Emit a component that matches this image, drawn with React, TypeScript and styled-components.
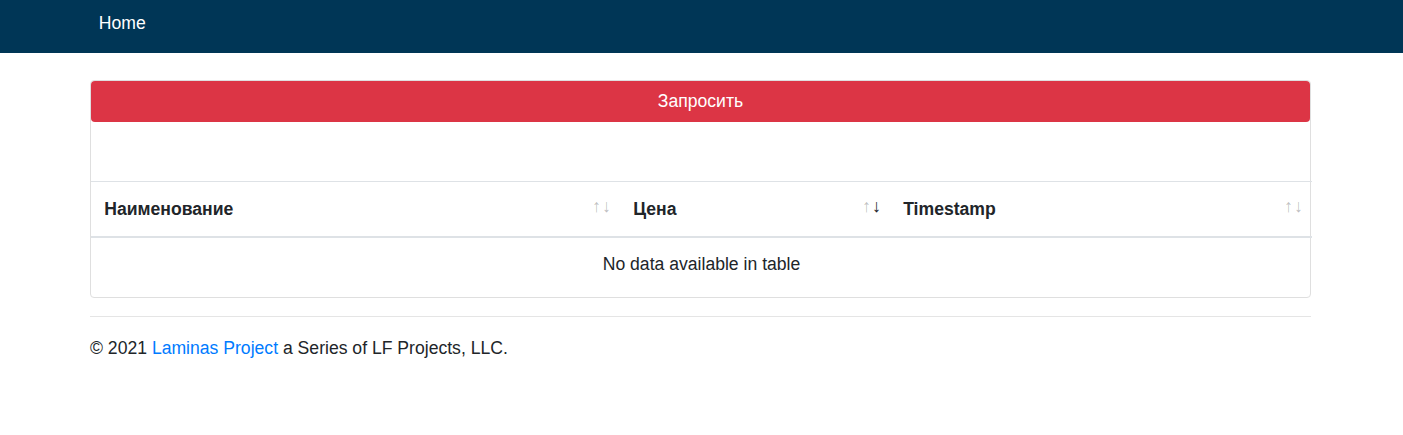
import styled, { createGlobalStyle } from 'styled-components';

const GlobalStyle = createGlobalStyle`
  body {
    margin: 0;
    font-family: 'Liberation Sans', Arial, sans-serif;
    font-size: 17.6px;
    line-height: 1.5;
    color: #212529;
    background: #fff;
  }
`;

type Column = {
  label: string;
  width: number;
  sort?: 'asc' | 'desc';
};

const columns: Column[] = [
  { label: 'Наименование', width: 529 },
  { label: 'Цена', width: 270, sort: 'desc' },
  { label: 'Timestamp', width: 422 },
];

const App = () => {
  return (
    <>
      <GlobalStyle />
      <Navbar>
        <NavLink href="#">Home</NavLink>
      </Navbar>
      <Main>
        <Card>
          <RequestButton type="button">Запросить</RequestButton>
          <Toolbar />
          <Table>
            <thead>
              <tr>
                {columns.map((col) => (
                  <Th key={col.label} style={{ width: col.width }}>
                    <HeadInner>
                      <span>{col.label}</span>
                      <SortIcon>
                        <Arrow $active={col.sort === 'asc'}>↑</Arrow>
                        <Arrow $active={col.sort === 'desc'}>↓</Arrow>
                      </SortIcon>
                    </HeadInner>
                  </Th>
                ))}
              </tr>
            </thead>
            <tbody>
              <tr>
                <EmptyCell colSpan={3}>No data available in table</EmptyCell>
              </tr>
            </tbody>
          </Table>
        </Card>
        <Footer>
          © 2021 <FooterLink href="#">Laminas Project</FooterLink> a Series of LF Projects, LLC.
        </Footer>
      </Main>
    </>
  );
};

const Navbar = styled.nav`
  height: 53px;
  background: #003656;
  display: flex;
  align-items: center;
  padding: 0 0 7px 90px;
  box-sizing: border-box;
`;

const NavLink = styled.a`
  color: #fff;
  text-decoration: none;
  font-size: 17.6px;
  padding: 0 8.8px;
`;

const Main = styled.main`
  padding: 27px 92px 0 90px;
`;

const Card = styled.div`
  border: 1px solid #dfdfdf;
  border-radius: 4px;
  padding-bottom: 6px;
`;

const RequestButton = styled.button`
  display: block;
  width: 100%;
  height: 41px;
  border: 0;
  border-radius: 4px;
  background: #dc3545;
  color: #fff;
  font-family: inherit;
  font-size: 17.6px;
  line-height: 1.5;
  cursor: pointer;
`;

const Toolbar = styled.div`
  height: 59px;
`;

const Table = styled.table`
  width: 100%;
  border-collapse: collapse;
  table-layout: fixed;
`;

const Th = styled.th`
  text-align: left;
  font-weight: bold;
  padding: 14px 9px 13.4px 13.2px;
  border-top: 1px solid #dee2e6;
  border-bottom: 2px solid #dee2e6;
  box-sizing: border-box;
`;

const HeadInner = styled.div`
  display: flex;
  justify-content: space-between;
  align-items: center;
`;

const SortIcon = styled.span`
  display: flex;
  gap: 1px;
  font-size: 18px;
  font-weight: normal;
  line-height: 1;
  margin-top: -7px;
`;

const Arrow = styled.span<{ $active: boolean }>`
  color: ${(p) => (p.$active ? '#212529' : 'rgba(33, 37, 41, 0.3)')};
`;

const EmptyCell = styled.td`
  text-align: center;
  padding: 13.2px;
`;

const Footer = styled.footer`
  margin-top: 18px;
  border-top: 1px solid #e5e5e5;
  padding-top: 18px;
`;

const FooterLink = styled.a`
  color: #007bff;
  text-decoration: none;
`;

export default App;
